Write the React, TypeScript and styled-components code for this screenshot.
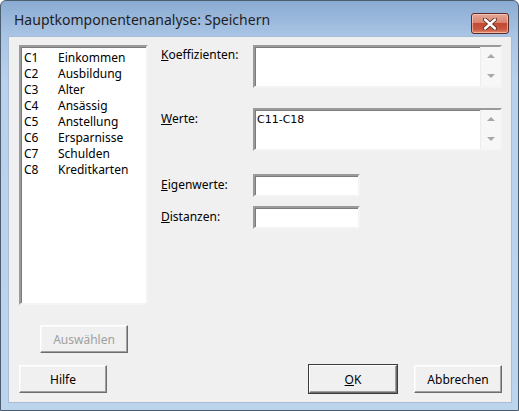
import React from "react";
import styled, { createGlobalStyle } from "styled-components";

const GlobalStyle = createGlobalStyle`
  html, body {
    margin: 0;
    padding: 0;
    background: #ffffff;
  }
  * {
    box-sizing: border-box;
  }
`;

const columns = [
  { id: "C1", name: "Einkommen" },
  { id: "C2", name: "Ausbildung" },
  { id: "C3", name: "Alter" },
  { id: "C4", name: "Ansässig" },
  { id: "C5", name: "Anstellung" },
  { id: "C6", name: "Ersparnisse" },
  { id: "C7", name: "Schulden" },
  { id: "C8", name: "Kreditkarten" },
];

const Window = styled.div`
  width: 519px;
  height: 411px;
  display: flex;
  flex-direction: column;
  border: 1px solid #4d5d70;
  border-radius: 6px 6px 0 0;
  background: linear-gradient(#8aabd2 0px, #a9c4e4 34px, #b9d1ea 80px, #bcd4ec 100%);
  font-family: "Noto Sans", "Open Sans", sans-serif;
  color: #000;
  overflow: hidden;
`;

const TitleBar = styled.div`
  height: 35px;
  flex: none;
  display: flex;
  align-items: center;
  padding: 0 10px 0 13px;
`;

const Title = styled.div`
  font-size: 14px;
  color: #1e1e1e;
  margin-top: 2px;
`;

const CloseButton = styled.div`
  margin-left: auto;
  width: 38px;
  height: 21px;
  margin-top: 10px;
  margin-right: -1px;
  display: flex;
  align-items: center;
  justify-content: center;
  border: 1px solid #5e2b24;
  border-radius: 3px;
  background: linear-gradient(#e6a697 0%, #d88571 45%, #c24a33 50%, #c9573f 80%, #e08a70 100%);
  box-shadow: inset 0 0 0 1px rgba(255, 220, 210, 0.55);
`;

const Body = styled.div`
  flex: 1;
  margin: 0 6px 7px 7px;
  background: #f0f0f0;
  border: 1px solid #a7bcd5;
  display: flex;
  flex-direction: column;
  padding: 8px 9px 9px 10px;
  font-size: 12px;
`;

const Main = styled.div`
  display: flex;
  gap: 13px;
`;

const Sunken = styled.div`
  background: #ffffff;
  border-style: solid;
  border-width: 2px;
  border-color: #9a9a9a #f4f4f4 #f4f4f4 #9a9a9a;
  box-shadow: inset 1px 1px 0 #7c7c7c;
`;

const ListBox = styled(Sunken)`
  width: 129px;
  height: 260px;
  padding: 3px 0 0 3px;
`;

const ListRow = styled.div`
  display: flex;
  height: 16px;
  line-height: 16px;
  font-size: 12px;
`;

const ColId = styled.span`
  width: 34px;
`;

const Form = styled.div`
  flex: 1;
  display: flex;
  flex-direction: column;
`;

const FieldRow = styled.div<{ $gap: number }>`
  display: flex;
  margin-top: ${(p) => p.$gap}px;
`;

const Label = styled.div<{ $pad: number }>`
  width: 92px;
  padding-top: ${(p) => p.$pad}px;
  font-size: 12px;
`;

const MultiBox = styled(Sunken)`
  flex: 1;
  height: 43px;
  display: flex;
`;

const MultiText = styled.div`
  flex: 1;
  padding: 3px 2px;
  font-family: "DejaVu Sans", Verdana, sans-serif;
  font-size: 11px;
`;

const ScrollCol = styled.div`
  width: 20px;
  background: #f7f7f7;
  border-left: 1px solid #ececec;
  display: flex;
  flex-direction: column;
  justify-content: space-between;
  align-items: center;
  padding: 7px 0 8px;
`;

const Arrow = styled.div<{ $down?: boolean }>`
  width: 0;
  height: 0;
  border-left: 4px solid transparent;
  border-right: 4px solid transparent;
  ${(p) =>
    p.$down
      ? "border-top: 4px solid #a8a8a8;"
      : "border-bottom: 4px solid #a8a8a8;"}
`;

const SingleBox = styled(Sunken)`
  width: 107px;
  height: 23px;
`;

const SelectRow = styled.div`
  margin-top: 20px;
  padding-left: 21px;
`;

const ButtonRow = styled.div`
  margin-top: auto;
  display: flex;
  gap: 17px;
`;

const Button = styled.div<{ $disabled?: boolean; $default?: boolean }>`
  width: 88px;
  height: 28px;
  display: flex;
  align-items: center;
  justify-content: center;
  font-size: 12px;
  color: ${(p) => (p.$disabled ? "#a0a0a0" : "#000")};
  background: #f0f0f0;
  border-style: solid;
  border-width: 1px;
  border-color: #ffffff #6d6d6d #6d6d6d #ffffff;
  box-shadow: ${(p) =>
    p.$default
      ? "0 0 0 1px #3c3c3c, inset -1px -1px 0 #a0a0a0"
      : "inset -1px -1px 0 #a0a0a0, inset 1px 1px 0 #f8f8f8"};

  &:first-child {
    margin-right: auto;
  }
`;

function CloseGlyph() {
  return (
    <svg width="14" height="12" viewBox="0 0 14 12">
      <path
        d="M2 1.5 L12 10.5 M12 1.5 L2 10.5"
        stroke="#5a2a22"
        strokeWidth="4.2"
        strokeLinecap="round"
        fill="none"
      />
      <path
        d="M2 1.5 L12 10.5 M12 1.5 L2 10.5"
        stroke="#ffffff"
        strokeWidth="2.4"
        strokeLinecap="round"
        fill="none"
      />
    </svg>
  );
}

function MultiField({ value }: { value?: string }) {
  return (
    <MultiBox>
      <MultiText>{value}</MultiText>
      <ScrollCol>
        <Arrow />
        <Arrow $down />
      </ScrollCol>
    </MultiBox>
  );
}

export default function App() {
  return (
    <>
      <GlobalStyle />
      <Window>
        <TitleBar>
          <Title>Hauptkomponentenanalyse: Speichern</Title>
          <CloseButton>
            <CloseGlyph />
          </CloseButton>
        </TitleBar>
        <Body>
          <Main>
            <ListBox>
              {columns.map((c) => (
                <ListRow key={c.id}>
                  <ColId>{c.id}</ColId>
                  <span>{c.name}</span>
                </ListRow>
              ))}
            </ListBox>
            <Form>
              <FieldRow $gap={0}>
                <Label $pad={1}>
                  <u>K</u>oeffizienten:
                </Label>
                <MultiField />
              </FieldRow>
              <FieldRow $gap={20}>
                <Label $pad={2}>
                  <u>W</u>erte:
                </Label>
                <MultiField value="C11-C18" />
              </FieldRow>
              <FieldRow $gap={23}>
                <Label $pad={2}>
                  <u>E</u>igenwerte:
                </Label>
                <SingleBox />
              </FieldRow>
              <FieldRow $gap={9}>
                <Label $pad={2}>
                  <u>D</u>istanzen:
                </Label>
                <SingleBox />
              </FieldRow>
            </Form>
          </Main>
          <SelectRow>
            <Button $disabled>Auswählen</Button>
          </SelectRow>
          <ButtonRow>
            <Button>Hilfe</Button>
            <Button $default>
              <span>
                <u>O</u>K
              </span>
            </Button>
            <Button>Abbrechen</Button>
          </ButtonRow>
        </Body>
      </Window>
    </>
  );
}
